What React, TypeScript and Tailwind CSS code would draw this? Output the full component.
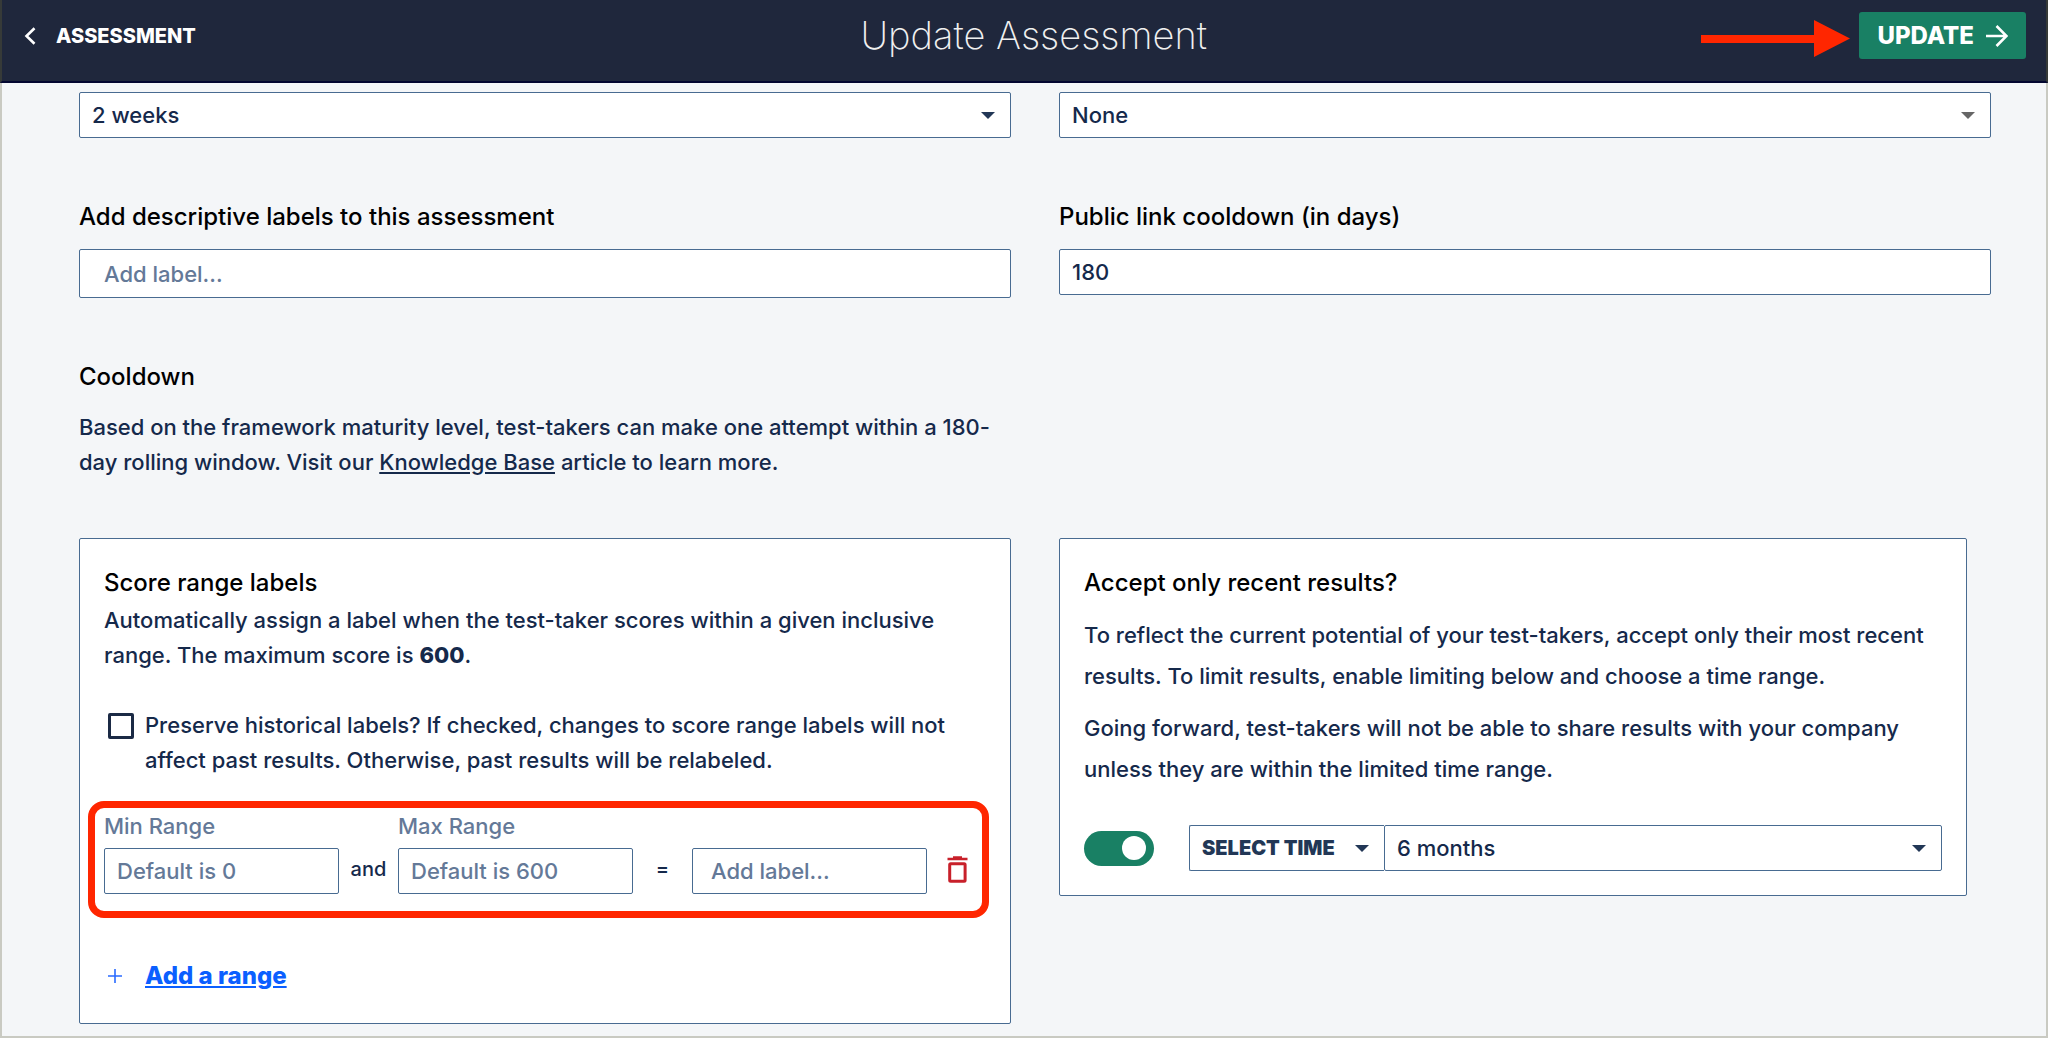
import { useState } from "react";
import type { ReactNode } from "react";

const border = "border border-[#486b91] rounded-xs bg-white";
const field =
  "w-full rounded-xs border border-[#486b91] bg-white text-[22px] font-medium text-[#15294b] placeholder:text-[#647998] outline-none";

function Caret({ className = "" }: { className?: string }) {
  return (
    <svg viewBox="0 0 14 7" className={`h-[7px] w-[14px] shrink-0 ${className}`} fill="currentColor" aria-hidden="true">
      <path d="M0 0h14L7 7z" />
    </svg>
  );
}

function Select({ label, options, caret = "text-[#223756]" }: { label: string; options: string[]; caret?: string }) {
  return (
    <div className="relative w-full">
      <select aria-label={label} className={`${field} h-[46px] appearance-none pr-12 pl-3`}>
        {options.map((o) => (
          <option key={o}>{o}</option>
        ))}
      </select>
      <Caret className={`pointer-events-none absolute top-5 right-4 ${caret}`} />
    </div>
  );
}

function Heading({ children }: { children: ReactNode }) {
  return <h2 className="text-2xl leading-8 font-medium text-black">{children}</h2>;
}

function RangeRow() {
  return (
    <div className="relative mt-[34px] flex items-end">
      <div className="min-w-0 flex-1">
        <label htmlFor="min" className="mb-2 block text-[22px] leading-7 font-medium text-[#647998]">
          Min Range
        </label>
        <input id="min" className={`${field} h-[46px] px-3`} placeholder="Default is 0" />
      </div>
      <span className="w-[59px] text-center text-xl leading-[50px] font-medium text-[#15294b]">and</span>
      <div className="min-w-0 flex-1">
        <label htmlFor="max" className="mb-2 block text-[22px] leading-7 font-medium text-[#647998]">
          Max Range
        </label>
        <input id="max" className={`${field} h-[46px] px-3`} placeholder="Default is 600" />
      </div>
      <span className="w-[59px] text-center text-xl leading-[50px] font-medium text-[#15294b]">=</span>
      <div className="min-w-0 flex-1">
        <input aria-label="Range label" className={`${field} h-[46px] px-[18px]`} placeholder="Add label..." />
      </div>
      <button aria-label="Delete range" className="flex h-[50px] w-[59px] items-center pl-5 text-[#c8202a]">
        <svg viewBox="0 0 21 27" className="h-[27px] w-[21px]" aria-hidden="true">
          <path d="M0.500 3h20M6 1.500h9" fill="none" stroke="currentColor" strokeWidth="2.4" />
          <rect x="2.700" y="7.700" width="15.400" height="17.600" rx="1" fill="none" stroke="currentColor" strokeWidth="3" />
        </svg>
      </button>
      <div className="pointer-events-none absolute -top-[11px] -right-[3px] -bottom-6 -left-4 rounded-2xl border-[7px] border-[#ff2600]" />
    </div>
  );
}

function ScoreCard() {
  return (
    <section className={`${border} px-6 pt-7 pb-[31px]`}>
      <Heading>Score range labels</Heading>
      <p className="mt-1 text-[22px] leading-[35px] font-medium">
        Automatically assign a label when the test-taker scores within a given inclusive range. The maximum score is{" "}
        <b className="font-extrabold">600</b>.
      </p>
      <label className="mt-[35px] flex gap-[11px] pr-8 pl-1 text-[22px] leading-[35px] font-medium">
        <input
          type="checkbox"
          className="mt-[5px] size-[26px] shrink-0 appearance-none rounded-xs border-[3px] border-[#1b2a45] bg-white checked:bg-[#1b2a45]"
        />
        <span>
          Preserve historical labels? If checked, changes to score range labels will not affect past results.
          Otherwise, past results will be relabeled.
        </span>
      </label>
      <RangeRow />
      <div className="mt-[66px] flex items-center gap-[23px] pl-1">
        <svg viewBox="0 0 14 14" className="size-[14px] text-[#2a6bff]" aria-hidden="true">
          <path d="M7 0v14M0 7h14" stroke="currentColor" strokeWidth="1.6" />
        </svg>
        <a href="#add" className="text-2xl leading-8 font-extrabold text-[#0b5fff] underline decoration-2 underline-offset-2">
          Add a range
        </a>
      </div>
    </section>
  );
}

function RecentCard() {
  const [on, setOn] = useState(true);
  return (
    <section className={`${border} mt-[58px] mr-6 self-start px-6 pt-7 pb-6`}>
      <Heading>Accept only recent results?</Heading>
      <p className="mt-4 text-[22px] leading-[41px] font-medium">
        To reflect the current potential of your test-takers, accept only their most recent results. To limit results,
        enable limiting below and choose a time range.
      </p>
      <p className="mt-[11px] text-[22px] leading-[41px] font-medium">
        Going forward, test-takers will not be able to share results with your company unless they are within the
        limited time range.
      </p>
      <div className="mt-[35px] flex items-center">
        <button
          role="switch"
          aria-checked={on}
          aria-label="Limit results"
          onClick={() => setOn(!on)}
          className={`flex h-[35px] w-[70px] shrink-0 items-center rounded-full px-2 ${on ? "justify-end bg-[#198064]" : "justify-start bg-[#647998]"}`}
        >
          <span className="size-6 rounded-full bg-white" />
        </button>
        <button
          aria-haspopup="listbox"
          className="ml-[35px] flex h-[46px] w-[195px] shrink-0 items-center justify-between rounded-l-xs border border-r-0 border-[#486b91] pr-[15px] pl-3 text-xl font-black whitespace-nowrap text-[#223756]"
        >
          SELECT TIME
          <Caret />
        </button>
        <Select label="Time range" options={["6 months", "1 year"]} />
      </div>
    </section>
  );
}

export default function App() {
  return (
    <div className="flex min-h-screen flex-col bg-[#f4f6f8] font-['Inter','Liberation_Sans',sans-serif] text-[#15294b]">
      <header className="relative flex h-[83px] items-start justify-between border-x-2 border-b-2 border-x-[#363a38] border-b-[#030730] bg-[#1f273c] pt-3 pr-5 pl-[22px] text-white">
        <a href="#assessment" className="flex h-[47px] items-center gap-5 text-xl font-extrabold">
          <svg viewBox="0 0 12 18" className="h-[18px] w-3" fill="none" stroke="currentColor" strokeWidth="2.6" aria-hidden="true">
            <path d="M10.500 1.200 2.500 9l8 7.800" />
          </svg>
          ASSESSMENT
        </a>
        <h1 className="pl-3 text-[38px] leading-[47px] font-extralight text-[#f0f0f0]">Update Assessment</h1>
        <button className="flex h-[47px] items-center gap-3 rounded-[3px] bg-[#198064] px-[18px] text-2xl font-extrabold">
          UPDATE
          <svg viewBox="0 0 22 22" className="size-[22px]" fill="none" stroke="currentColor" strokeWidth="2.6" aria-hidden="true">
            <path d="M0 11h21M10.500 1 20.500 11l-10 10" />
          </svg>
        </button>
        <svg viewBox="0 0 149 37" className="pointer-events-none absolute top-5 right-[196px] h-[37px] w-[149px]" fill="#ff2600" aria-hidden="true">
          <path d="M0 15h113V0l36 18.500L113 37V23H0z" />
        </svg>
      </header>
      <main className="grid grow grid-cols-2 content-start gap-x-12 border-x-2 border-b-2 border-[#c9cac2] pt-[9px] pr-[55px] pb-3 pl-[77px]">
        <Select label="Duration" options={["2 weeks", "4 weeks"]} />
        <Select label="Template" options={["None"]} caret="text-[#666666]" />
        <div className="mt-[63px]">
          <label htmlFor="labels" className="mb-4 block text-2xl leading-8 font-medium text-black">
            Add descriptive labels to this assessment
          </label>
          <input id="labels" className={`${field} block h-[49px] px-6`} placeholder="Add label..." />
        </div>
        <div className="mt-[63px]">
          <label htmlFor="cooldown" className="mb-4 block text-2xl leading-8 font-medium text-black">
            Public link cooldown (in days)
          </label>
          <input id="cooldown" className={`${field} block h-[46px] px-3`} defaultValue="180" />
        </div>
        <div className="col-start-1 mt-[63px]">
          <Heading>Cooldown</Heading>
          <p className="mt-[17px] text-[22px] leading-[35px] font-medium">
            Based on the framework maturity level, test-takers can make one attempt within a 180-day rolling window.
            Visit our{" "}
            <a href="#kb" className="underline underline-offset-2">
              Knowledge Base
            </a>{" "}
            article to learn more.
          </p>
        </div>
        <div className="col-start-1 mt-[58px] grid">
          <ScoreCard />
        </div>
        <RecentCard />
      </main>
    </div>
  );
}
